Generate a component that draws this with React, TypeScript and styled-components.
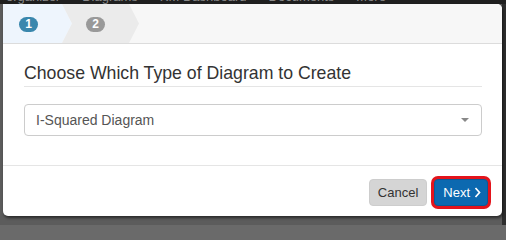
import styled, { createGlobalStyle } from "styled-components";

const GlobalStyle = createGlobalStyle`
  html, body {
    margin: 0;
    padding: 0;
    background: #6a6a6a;
    font-family: "Liberation Sans", Arial, sans-serif;
    overflow: hidden;
  }
`;

const Page = styled.div`
  width: 506px;
  height: 225px;
  display: flex;
  flex-direction: column;
  background: #6a6a6a;
`;

const NavStrip = styled.div`
  height: 4px;
  overflow: hidden;
  background: #1f1f1f;
  display: flex;
  align-items: flex-end;
  gap: 22px;
  padding-left: 6px;
  color: #8a8a8a;
  font-size: 13px;
  line-height: 14px;
  white-space: nowrap;
`;

const Backdrop = styled.div`
  flex: 1;
  display: flex;
  padding-left: 3px;
  background: linear-gradient(to right, #5c5c5c 0, #5c5c5c 502px, #2e2e2e 502px);
`;

const Modal = styled.div`
  width: 499px;
  height: 212px;
  background: #fff;
  border-radius: 0 5px 5px 5px;
  box-shadow: 1px 2px 3px rgba(0, 0, 0, 0.55);
  display: flex;
  flex-direction: column;
  overflow: hidden;
`;

const StepBar = styled.div`
  height: 39px;
  flex-shrink: 0;
  background: #f7f7f7;
  border-bottom: 1px solid #dcdcdc;
  display: flex;
`;

const Step = styled.div<{ $first?: boolean; $active?: boolean }>`
  height: 100%;
  display: flex;
  align-items: center;
  box-sizing: border-box;
  width: ${(p) => (p.$first ? "69px" : "77px")};
  margin-left: ${(p) => (p.$first ? "0" : "-10px")};
  padding-left: ${(p) => (p.$first ? "16px" : "24px")};
  padding-top: 1px;
  background: ${(p) => (p.$active ? "#eef5fd" : "#ebebeb")};
  clip-path: ${(p) =>
    p.$first
      ? "polygon(0 0, 59px 0, 69px 50%, 59px 100%, 0 100%)"
      : "polygon(0 0, 67px 0, 77px 50%, 67px 100%, 0 100%, 10px 50%)"};
`;

const Badge = styled.span<{ $active?: boolean }>`
  width: 19px;
  height: 15px;
  border-radius: 8px;
  background: ${(p) => (p.$active ? "#3a87ad" : "#999")};
  color: #fff;
  font-size: 12px;
  font-weight: bold;
  display: flex;
  align-items: center;
  justify-content: center;
`;

const Body = styled.div`
  padding: 19px 20px 29px 21px;
  display: flex;
  flex-direction: column;
`;

const Title = styled.h4`
  margin: 0;
  font-size: 17.7px;
  font-weight: normal;
  line-height: 20px;
  color: #333;
  padding-bottom: 3px;
  border-bottom: 1px solid #e5e5e5;
`;

const Select = styled.div`
  margin-top: 17px;
  height: 32px;
  box-sizing: border-box;
  border: 1px solid #ccc;
  border-radius: 4px;
  padding: 0 11px;
  display: flex;
  align-items: center;
  justify-content: space-between;
  font-size: 14px;
  color: #555;
`;

const Caret = styled.span`
  width: 0;
  height: 0;
  border-left: 4px solid transparent;
  border-right: 4px solid transparent;
  border-top: 4px solid #888;
  margin-right: 1px;
`;

const Footer = styled.div`
  border-top: 1px solid #e5e5e5;
  padding: 13px 14px 9px;
  display: flex;
  justify-content: flex-end;
  gap: 7px;
`;

const Button = styled.button<{ $primary?: boolean }>`
  height: 27px;
  box-sizing: border-box;
  border-radius: 4px;
  font-family: "Liberation Sans", Arial, sans-serif;
  font-size: 13px;
  display: flex;
  align-items: center;
  justify-content: center;
  gap: 4px;
  padding: ${(p) => (p.$primary ? "0 6px 0 8px" : "0 8px")};
  border: 1px solid ${(p) => (p.$primary ? "#0b5a96" : "#cdcdcd")};
  background: ${(p) => (p.$primary ? "#0c69b0" : "#d5d5d5")};
  color: ${(p) => (p.$primary ? "#fff" : "#333")};
  box-shadow: ${(p) => (p.$primary ? "0 0 0 3px #e3141c" : "none")};

  svg {
    flex-shrink: 0;
  }
`;

export default function App() {
  return (
    <>
      <GlobalStyle />
      <Page>
        <NavStrip>
          <span>organizer</span>
          <span>Diagrams</span>
          <span>KM Dashboard</span>
          <span>Documents</span>
          <span>More</span>
        </NavStrip>
        <Backdrop>
          <Modal>
            <StepBar>
              <Step $first $active>
                <Badge $active>1</Badge>
              </Step>
              <Step>
                <Badge>2</Badge>
              </Step>
            </StepBar>
            <Body>
              <Title>Choose Which Type of Diagram to Create</Title>
              <Select>
                <span>I-Squared Diagram</span>
                <Caret />
              </Select>
            </Body>
            <Footer>
              <Button>Cancel</Button>
              <Button $primary>
                Next
                <svg width="7" height="11" viewBox="0 0 7 11">
                  <polyline
                    points="1.5,1 5.5,5.5 1.5,10"
                    fill="none"
                    stroke="#fff"
                    strokeWidth="1.7"
                  />
                </svg>
              </Button>
            </Footer>
          </Modal>
        </Backdrop>
      </Page>
    </>
  );
}
